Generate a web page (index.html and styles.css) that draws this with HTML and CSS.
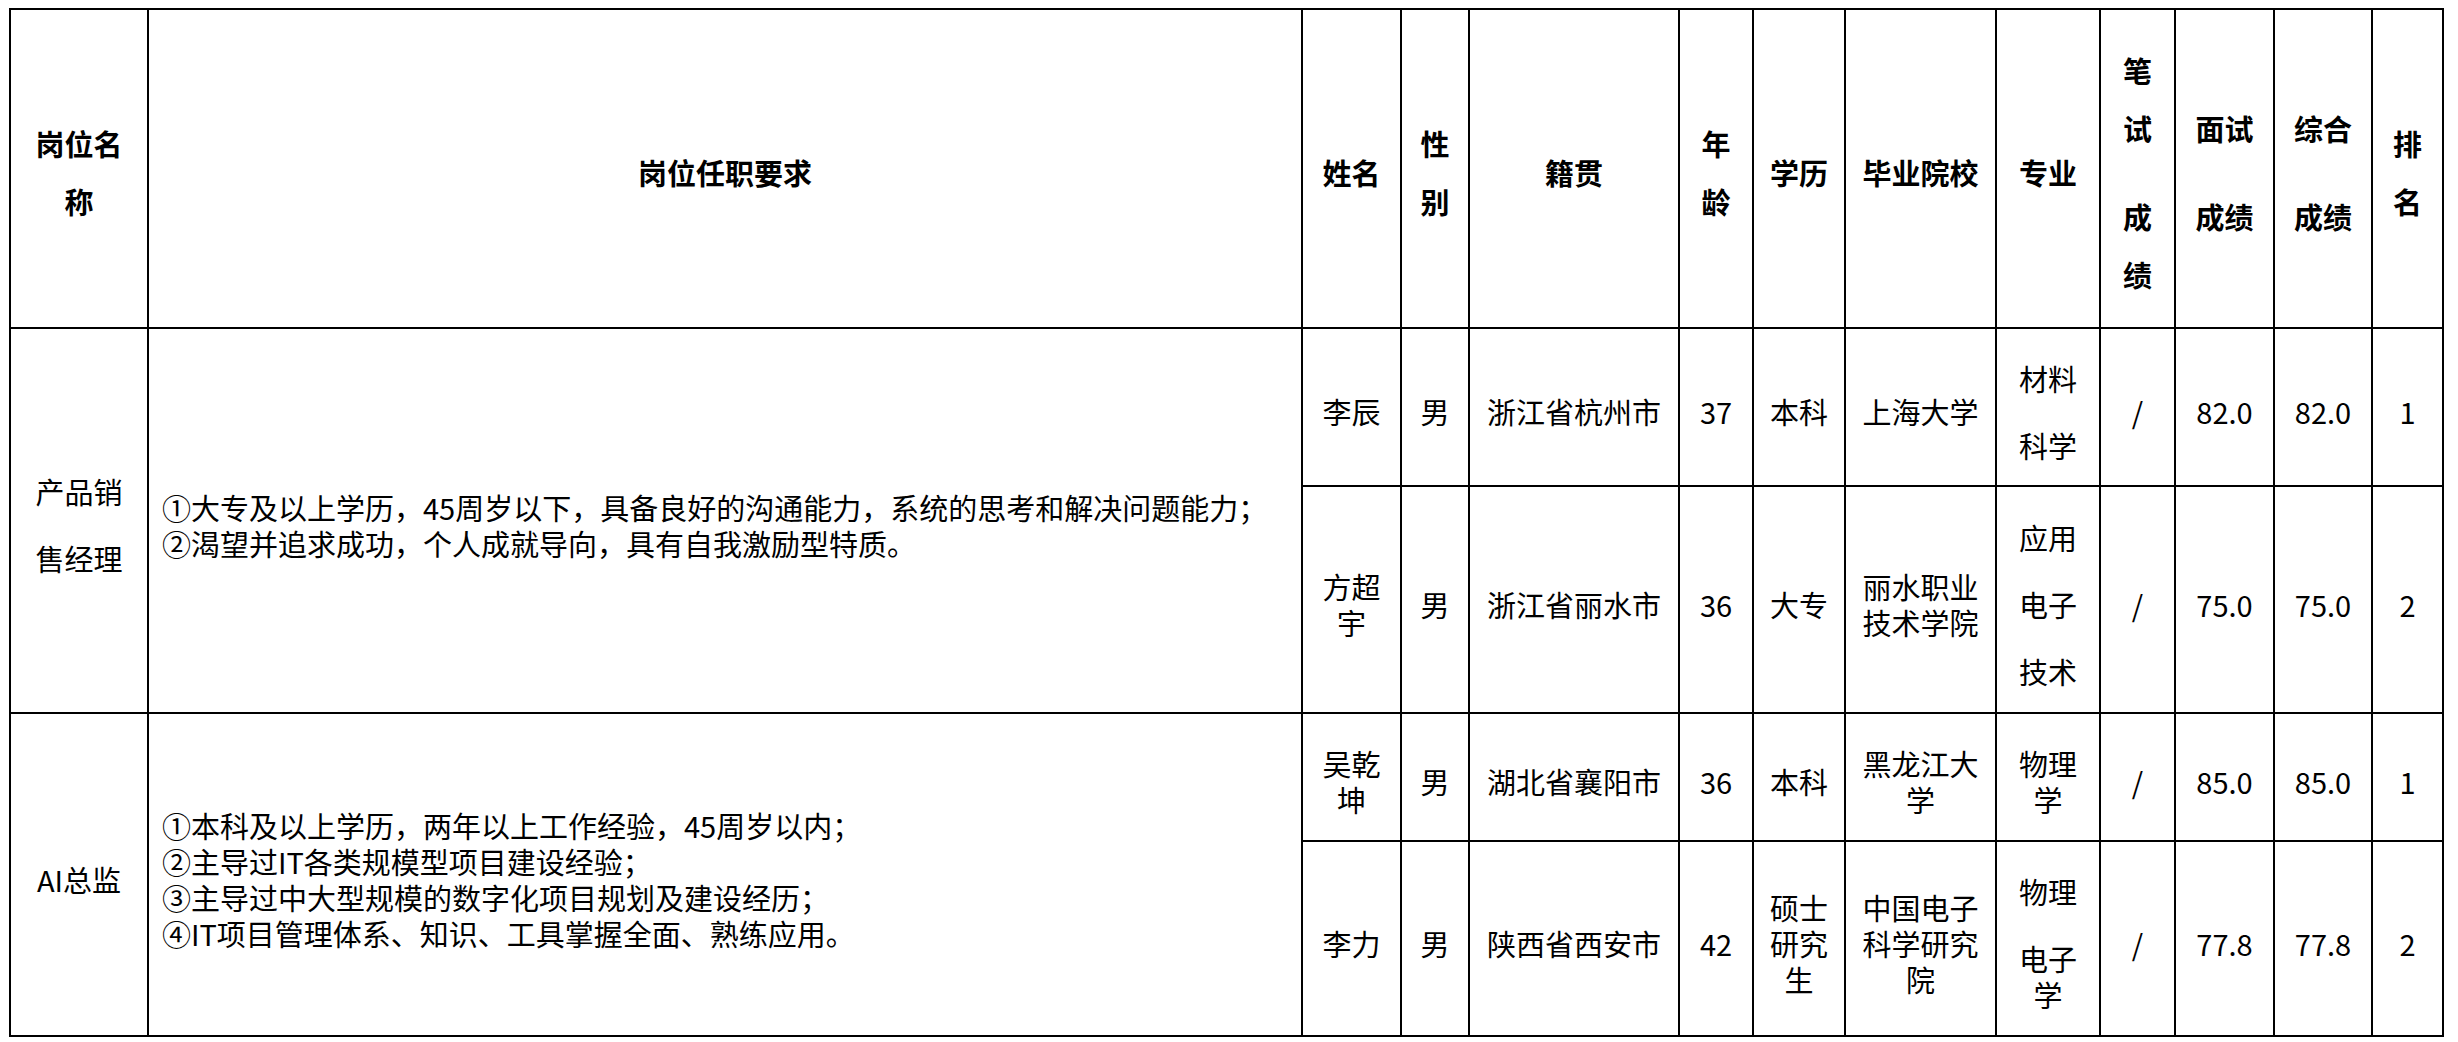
FILE: index.html
```html
<!DOCTYPE html>
<html lang="zh-CN">
<head>
<meta charset="utf-8">
<title>岗位招聘结果</title>
<link rel="stylesheet" href="styles.css">
</head>
<body>
<div class="sheet">
  <div class="cell hd"><span>岗位名<br>称</span></div>
  <div class="cell hd"><span>岗位任职要求</span></div>
  <div class="cell hd"><span>姓名</span></div>
  <div class="cell hd"><span>性<br>别</span></div>
  <div class="cell hd"><span>籍贯</span></div>
  <div class="cell hd"><span>年<br>龄</span></div>
  <div class="cell hd"><span>学历</span></div>
  <div class="cell hd"><span>毕业院校</span></div>
  <div class="cell hd"><span>专业</span></div>
  <div class="cell hd"><span>笔<br>试</span><span class="hgap">成<br>绩</span></div>
  <div class="cell hd"><span>面试</span><span class="hgap">成绩</span></div>
  <div class="cell hd"><span>综合</span><span class="hgap">成绩</span></div>
  <div class="cell hd"><span>排<br>名</span></div>

  <div class="cell span2"><span>产品销</span><span class="gap">售经理</span></div>
  <div class="cell span2 desc"><span>①大专及以上学历，45周岁以下，具备良好的沟通能力，系统的思考和解决问题能力；<br>②渴望并追求成功，个人成就导向，具有自我激励型特质。</span></div>
  <div class="cell"><span>李辰</span></div>
  <div class="cell"><span>男</span></div>
  <div class="cell"><span>浙江省杭州市</span></div>
  <div class="cell"><span>37</span></div>
  <div class="cell"><span>本科</span></div>
  <div class="cell"><span>上海大学</span></div>
  <div class="cell"><span>材料</span><span class="gap">科学</span></div>
  <div class="cell"><span>/</span></div>
  <div class="cell"><span>82.0</span></div>
  <div class="cell"><span>82.0</span></div>
  <div class="cell"><span>1</span></div>

  <div class="cell"><span>方超<br>宇</span></div>
  <div class="cell"><span>男</span></div>
  <div class="cell"><span>浙江省丽水市</span></div>
  <div class="cell"><span>36</span></div>
  <div class="cell"><span>大专</span></div>
  <div class="cell"><span>丽水职业<br>技术学院</span></div>
  <div class="cell"><span>应用</span><span class="gap">电子</span><span class="gap">技术</span></div>
  <div class="cell"><span>/</span></div>
  <div class="cell"><span>75.0</span></div>
  <div class="cell"><span>75.0</span></div>
  <div class="cell"><span>2</span></div>

  <div class="cell span2"><span>AI总监</span></div>
  <div class="cell span2 desc"><span>①本科及以上学历，两年以上工作经验，45周岁以内；<br>②主导过IT各类规模型项目建设经验；<br>③主导过中大型规模的数字化项目规划及建设经历；<br>④IT项目管理体系、知识、工具掌握全面、熟练应用。</span></div>
  <div class="cell"><span>吴乾<br>坤</span></div>
  <div class="cell"><span>男</span></div>
  <div class="cell"><span>湖北省襄阳市</span></div>
  <div class="cell"><span>36</span></div>
  <div class="cell"><span>本科</span></div>
  <div class="cell"><span>黑龙江大<br>学</span></div>
  <div class="cell"><span>物理<br>学</span></div>
  <div class="cell"><span>/</span></div>
  <div class="cell"><span>85.0</span></div>
  <div class="cell"><span>85.0</span></div>
  <div class="cell"><span>1</span></div>

  <div class="cell"><span>李力</span></div>
  <div class="cell"><span>男</span></div>
  <div class="cell"><span>陕西省西安市</span></div>
  <div class="cell"><span>42</span></div>
  <div class="cell"><span>硕士<br>研究<br>生</span></div>
  <div class="cell"><span>中国电子<br>科学研究<br>院</span></div>
  <div class="cell"><span>物理</span><span class="gap">电子<br>学</span></div>
  <div class="cell"><span>/</span></div>
  <div class="cell"><span>77.8</span></div>
  <div class="cell"><span>77.8</span></div>
  <div class="cell"><span>2</span></div>
</div>
</body>
</html>
```

FILE: styles.css
```css
html, body {
  margin: 0;
  padding: 0;
  background: #ffffff;
}

body {
  font-family: "Noto Sans CJK SC", "Microsoft YaHei", sans-serif;
  color: #000000;
}

.sheet {
  display: grid;
  width: max-content;
  margin: 8px 0 0 9px;
  grid-template-columns: 138px 1154px 99px 68px 210px 74px 92px 151px 104px 75px 99px 98px 71px;
  grid-template-rows: 319px 158px 227px 128px 195px;
  border-top: 2px solid #000;
  border-left: 2px solid #000;
}

.cell {
  box-sizing: border-box;
  border-right: 2px solid #000;
  border-bottom: 2px solid #000;
  padding: 8px 4px 0 4px;
  display: flex;
  flex-direction: column;
  justify-content: center;
  align-items: center;
  text-align: center;
  font-size: 29px;
  line-height: 36px;
  white-space: nowrap;
  overflow: hidden;
}

.cell > span {
  display: block;
}

.hd {
  font-weight: 700;
  line-height: 58px;
  padding-top: 6px;
}

.hgap {
  margin-top: 30px;
}

.gap {
  margin-top: 31px;
}

.span2 {
  grid-row: span 2;
}

.desc {
  align-items: flex-start;
  text-align: left;
  padding-left: 13px;
}
```
